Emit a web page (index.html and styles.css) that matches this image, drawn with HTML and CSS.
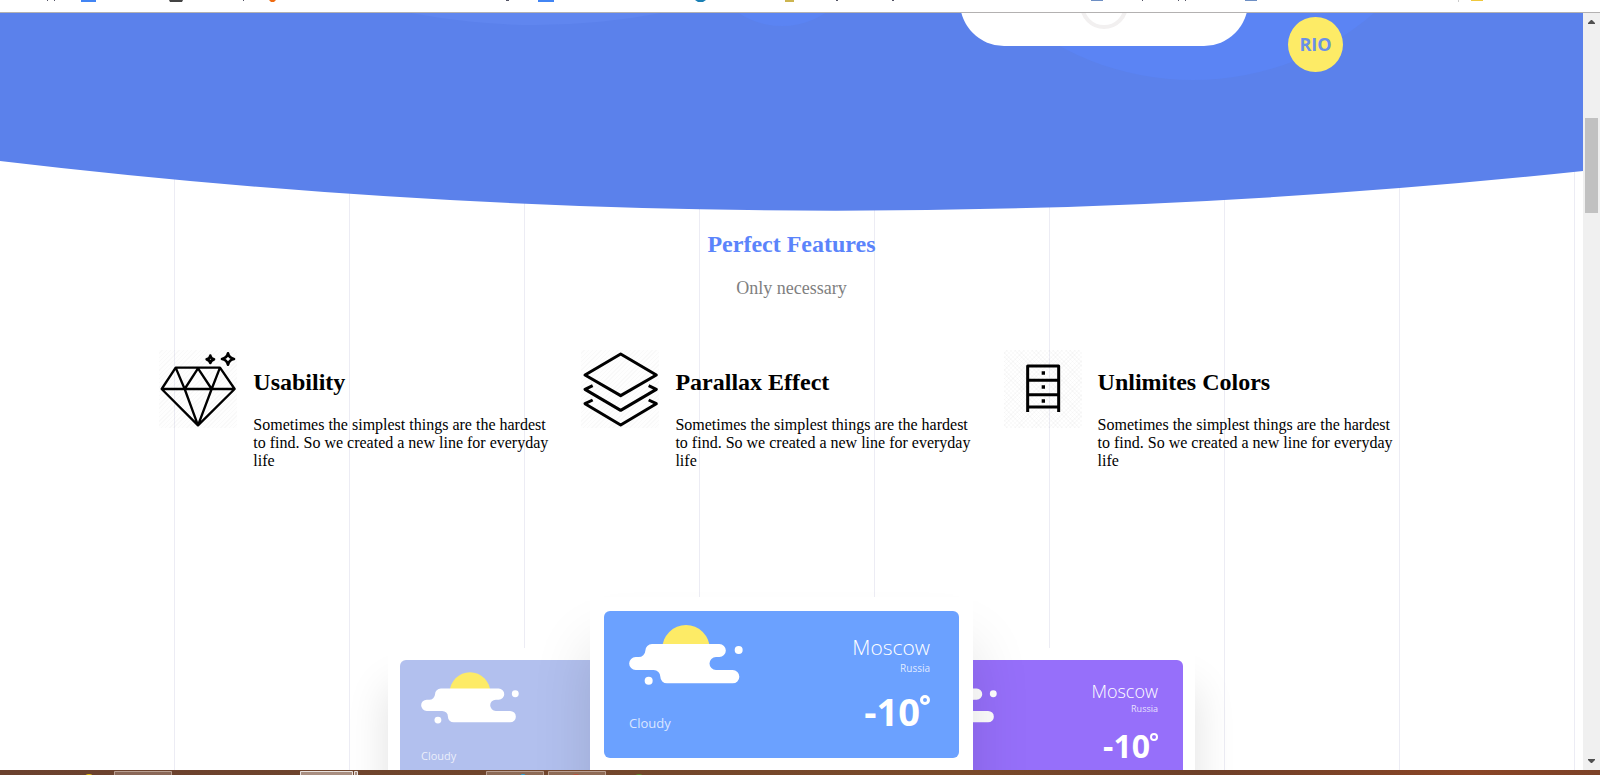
FILE: index.html
```html
<!DOCTYPE html>
<html lang="en">
<head>
<meta charset="utf-8">
<title>Perfect Features</title>
<link rel="stylesheet" href="styles.css">
</head>
<body>
<svg class="symbols" aria-hidden="true">
  <symbol id="cloud" viewBox="0 0 342 180">
    <circle cx="171" cy="71" r="71" fill="#fdeb66"/>
    <path fill="#fff" d="M69 57H271A19.500 19.500 0 0 1 271 96H261A19.500 19.500 0 0 0 261 135H311A20 20 0 0 1 311 175H114A20 20 0 0 1 94 155A20 20 0 0 0 74 135H20A19.500 19.500 0 0 1 20 96H29A20 20 0 0 0 49 77A20 20 0 0 1 69 57Z"/>
    <circle cx="329" cy="75" r="12" fill="#fff"/>
    <circle cx="59" cy="167" r="12" fill="#fff"/>
  </symbol>
</svg>
<header class="bookmarks">
  <svg width="1600" height="2" aria-hidden="true">
    <path fill="#4285f4" d="M81 0h15v2h-1H81zM538 0h16v2h-16z"/>
    <path fill="#444" d="M169 0h14l-1 2h-12z"/>
    <path fill="#ef6c13" d="M269 0h7l-2 2h-3z"/>
    <path fill="#1b80b5" d="M695 0h11l-3 2h-5z"/>
    <path fill="#cdb54f" d="M785 0h9v2h-9z"/>
    <path fill="#6e8fc4" d="M1091 0h12v1h-12zM1245 0h12v1h-12z"/>
    <path fill="#efc83c" d="M1471 0h12v1h-12z"/>
    <path fill="#556" d="M47 0h1v1h-1zM54 0h1v1h-1zM243 0h1v1h-1zM506 0h3v1h-3zM836 0h2v1h-2zM892 0h2v1h-2zM1142 0h1v1h-1zM1178 0h1v1h-1zM1185 0h1v1h-1z"/>
    <path fill="#ccc" d="M1458 0h1v2h-1z"/>
  </svg>
</header>
<div class="viewport">
  <main class="page">
    <section class="hero">
      <svg class="hero-shape" viewBox="0 0 1583 198" preserveAspectRatio="none" aria-hidden="true">
        <path fill="#5b81eb" d="M0 0V148Q791 242 1583 158V0Z"/>
        <circle cx="536" cy="-645" r="657" fill="#6086ef"/>
        <circle cx="782" cy="-66" r="79" fill="#5b84f3"/>
        <ellipse cx="1193" cy="-193" rx="270" ry="260" fill="#5b84f4"/>
        <rect x="960" y="-200" width="288" height="233" rx="44" fill="#fff"/>
        <circle cx="1104" cy="-8" r="22" fill="none" stroke="#f2f0f0" stroke-width="4"/>
      </svg>
      <span class="badge">RIO</span>
    </section>
    <section class="intro">
      <h2>Perfect Features</h2>
      <p>Only necessary</p>
    </section>
    <section class="features">
      <article class="feature">
        <svg class="icon" viewBox="0 0 234 234" fill="none" stroke="#000" stroke-width="7" stroke-linejoin="round" aria-hidden="true">
          <path d="M50 53H183L227 117L117 226L8 117ZM8 117H227M50 53L77 117L117 226L158 117L183 53M77 117L117 55L158 117"/>
          <path stroke-width="8" d="M154 17Q156 26 165 28Q156 30 154 39Q152 30 143 28Q152 26 154 17ZM207 10Q210 24 225 27Q210 30 207 44Q204 30 189 27Q204 24 207 10Z"/>
        </svg>
        <div class="feature-text">
          <h2>Usability</h2>
          <p>Sometimes the simplest things are the hardest to find. So we created a new line for everyday life</p>
        </div>
      </article>
      <article class="feature">
        <svg class="icon" viewBox="0 0 234 234" fill="none" stroke="#000" stroke-width="9" stroke-linejoin="round" aria-hidden="true">
          <path d="M119 12L226 75L119 137L12 75ZM35 107L12 118L119 181L226 118L203 107M35 150L12 161L119 225L226 161L203 150"/>
        </svg>
        <div class="feature-text">
          <h2>Parallax Effect</h2>
          <p>Sometimes the simplest things are the hardest to find. So we created a new line for everyday life</p>
        </div>
      </article>
      <article class="feature">
        <svg class="icon crossed" viewBox="0 0 234 234" fill="none" stroke="#000" stroke-width="9" stroke-linejoin="round" aria-hidden="true">
          <path d="M71 186V48H164V186M71 91H164M71 134H164M71 171H164"/>
          <path fill="#000" stroke="none" d="M113 64h10v10h-10zM113 106h10v10h-10zM113 148h10v10h-10z"/>
        </svg>
        <div class="feature-text">
          <h2>Unlimites Colors</h2>
          <p>Sometimes the simplest things are the hardest to find. So we created a new line for everyday life</p>
        </div>
      </article>
    </section>
    <section class="cards">
      <article class="card side left">
        <div class="face pale">
          <div class="sky"><svg class="cloud" aria-hidden="true"><use href="#cloud"/></svg><span class="state">Cloudy</span></div>
        </div>
      </article>
      <article class="card front">
        <div class="face blue">
          <div class="sky"><svg class="cloud" aria-hidden="true"><use href="#cloud"/></svg><span class="state">Cloudy</span></div>
          <div class="place"><span class="city">Moscow</span><span class="country">Russia</span><strong class="temp">-10<i class="degree"></i></strong></div>
        </div>
      </article>
      <article class="card side right">
        <div class="face violet">
          <div class="sky"><svg class="cloud" aria-hidden="true"><use href="#cloud"/></svg></div>
          <div class="place"><span class="city">Moscow</span><span class="country">Russia</span><strong class="temp">-10<i class="degree"></i></strong></div>
        </div>
      </article>
    </section>
  </main>
  <div class="scrollbar">
    <button type="button" aria-label="Scroll up"><svg width="7" height="4"><path fill="#505050" d="M3 0h1l3 3v1H0V3z"/></svg></button>
    <div class="track"><div class="thumb"></div></div>
    <button type="button" aria-label="Scroll down"><svg width="7" height="4"><path fill="#505050" d="M0 0h7v1L4 4H3L0 1z"/></svg></button>
  </div>
</div>
<footer class="taskbar">
  <svg width="1600" height="5" aria-hidden="true">
    <g fill="#fff" fill-opacity=".2" stroke="#c8b0a4" stroke-opacity=".8">
      <path d="M114.500 6V1.500H171.500V6M486.500 6V1.500H543.500V6M548.500 6V1.500H605.500V6"/>
      <path fill-opacity=".4" stroke="#fff" d="M300.500 6V1.500H352.500V6M354.500 6V1.500H357.500V6"/>
    </g>
    <ellipse cx="89" cy="7" rx="4" ry="3" fill="#e5c010"/>
    <ellipse cx="523" cy="7" rx="3" ry="3" fill="#23a6e0"/>
    <ellipse cx="576" cy="7" rx="4" ry="3" fill="#b8503c"/>
    <ellipse cx="639" cy="7" rx="4" ry="3" fill="#5c8a2c"/>
  </svg>
</footer>
</body>
</html>
```
FILE: styles.css
```css
* { box-sizing: border-box; }

body {
  margin: 0;
  height: 100vh;
  display: flex;
  flex-direction: column;
  overflow: hidden;
  background: #fff;
  font-family: "Liberation Serif", "Times New Roman", serif;
  font-size: 16px;
  line-height: 18px;
  color: #000;
}

h2, p { margin: 0; }
h2 { font-size: 24px; line-height: 28px; }

.symbols { position: absolute; width: 0; height: 0; }

.bookmarks {
  flex: none;
  height: 13px;
  overflow: hidden;
  border-bottom: 1px solid #b3b1b1;
}
.bookmarks svg, .taskbar svg { display: block; }

.viewport { flex: 1; min-height: 0; display: flex; }

.page {
  flex: 1;
  min-width: 0;
  overflow: hidden;
  background: repeating-linear-gradient(to right, transparent 0 174px, #ececf4 174px 175px);
}

.hero { position: relative; height: 198px; }
.hero-shape { display: block; width: 100%; height: 100%; }
.badge {
  position: absolute;
  top: 4px;
  right: 240px;
  width: 55px;
  height: 55px;
  border-radius: 50%;
  background: #fdeb66;
  color: #6a8fe8;
  font: bold 18px/55px "Open Sans", "Noto Sans", sans-serif;
  text-align: center;
}

.intro {
  padding-top: 19px;
  display: flex;
  flex-direction: column;
  gap: 20px;
  text-align: center;
}
.intro h2 { color: #5b84fb; }
.intro p { font-size: 18px; line-height: 20px; color: #808080; }

.features {
  width: 80%;
  margin: 52px auto 0;
  display: grid;
  grid-template-columns: repeat(3, 1fr);
}
.feature { display: flex; gap: 16px; padding-left: 1px; }
.icon {
  flex: none;
  width: 78px;
  height: 78px;
  background: repeating-linear-gradient(135deg, rgba(0, 0, 0, .005) 0 2px, rgba(0, 0, 0, .025) 2px 3px);
}
.icon.crossed {
  background:
    repeating-linear-gradient(135deg, transparent 0 2px, rgba(0, 0, 0, .02) 2px 3px),
    repeating-linear-gradient(45deg, transparent 0 2px, rgba(0, 0, 0, .02) 2px 3px);
}
.feature-text {
  flex: 1;
  padding: 18px 31px 0 0;
  display: flex;
  flex-direction: column;
  gap: 20px;
}

.cards {
  margin-top: 127px;
  display: flex;
  justify-content: center;
  align-items: flex-start;
  font-family: "Open Sans", "Noto Sans", sans-serif;
}
.card {
  position: relative;
  flex: none;
  background: #fff;
}
.front {
  z-index: 1;
  width: 383px;
  padding: 14px;
  height: 260px;
  box-shadow: 0 48px 56px rgba(0, 0, 0, .12);
}
.side {
  width: 328px;
  height: 222px;
  padding: 12px;
  margin-top: 51px;
  box-shadow: 0 40px 40px rgba(0, 0, 0, .12);
}
.left { margin-right: -126px; }
.right { margin-left: -106px; }

.face {
  display: flex;
  justify-content: space-between;
  color: #fff;
  border-radius: 6px;
}
.blue { background: #6ba1ff; height: 147px; padding: 14px 29px 0 25px; }
.pale { background: #b2c0ee; height: 126px; padding: 12px 25px 0 21px; }
.violet { background: #966ffa; height: 126px; padding: 12px 25px 0 20px; }

.sky, .place { display: flex; flex-direction: column; }
.cloud { display: block; width: 114px; height: 60px; }
.side .cloud { width: 98px; height: 52px; }
.state {
  margin-top: 28px;
  font-size: 13px;
  line-height: 20px;
  color: rgba(255, 255, 255, .75);
}
.side .state { margin-top: 22px; font-size: 11px; }

.place { align-items: flex-end; padding-top: 8px; }
.city { font-size: 21px; line-height: 28px; font-weight: 300; }
.country { font-size: 10px; line-height: 14px; color: rgba(255, 255, 255, .8); }
.temp {
  margin-top: 14px;
  display: flex;
  font-size: 38px;
  line-height: 44px;
}
.degree {
  width: 10px;
  height: 10px;
  margin-top: 6px;
  border: 3px solid #fff;
  border-radius: 50%;
}
.side .place { padding-top: 7px; }
.side .city { font-size: 18px; line-height: 24px; }
.side .country { font-size: 9px; line-height: 12px; }
.side .temp { margin-top: 12px; font-size: 32px; line-height: 38px; }
.side .degree { width: 8px; height: 8px; border-width: 2px; }

.scrollbar {
  flex: none;
  width: 17px;
  display: flex;
  flex-direction: column;
  background: #f0f0f0;
}
.scrollbar button {
  height: 18px;
  padding: 0;
  border: 0;
  background: none;
  display: grid;
  place-items: center;
}
.track { flex: 1; padding: 87px 2px 0; }
.thumb { height: 95px; background: #c1c1c1; }

.taskbar {
  flex: none;
  height: 5px;
  overflow: hidden;
  background: linear-gradient(to right, #6b412e, #70452c 30%, #7a4a2a 60%, #6e4029 75%, #8a4526 92%, #7c4228);
}
```
